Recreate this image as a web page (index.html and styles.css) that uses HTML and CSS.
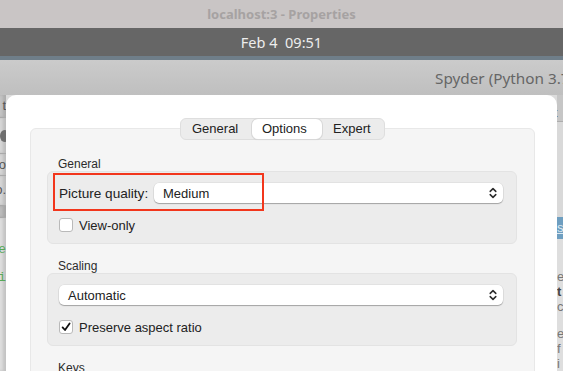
FILE: index.html
```html
<!DOCTYPE html>
<html lang="en">
<head>
    <meta charset="UTF-8">
    <title>localhost:3 - Properties</title>
    <link rel="stylesheet" href="styles.css">
</head>
<body>
    <div class="titlebar">localhost:3 - Properties</div>
    <div class="clockbar">Feb 4&nbsp; 09:51</div>
    <div class="appbar"><span class="app-title">Spyder (Python 3.7)</span></div>

    <div class="desk">
        <div class="edge edge-left">
            <div class="strip s-top">t</div>
            <div class="strip s-icon"><span class="blob"></span></div>
            <div class="strip s-row1">o</div>
            <div class="strip s-row2">o.</div>
            <div class="strip s-band"></div>
            <div class="strip s-code">
                <span class="code-e">e</span>
                <span class="code-i">i</span>
            </div>
        </div>

        <div class="dialog">
            <div class="tabs">
                <span class="tab">General</span>
                <span class="tab active">Options</span>
                <span class="tab">Expert</span>
            </div>

            <div class="panel">
                <div class="group-label">General</div>
                <div class="group">
                    <div class="row">
                        <span class="field-label">Picture quality:</span>
                        <div class="combo">
                            <span>Medium</span>
                            <svg class="chevrons" width="8" height="12" viewBox="0 0 8 12"><path d="M1.2 4.4 L4 1.6 L6.8 4.4 M1.2 7.6 L4 10.4 L6.8 7.6" fill="none" stroke="#2b2b2b" stroke-width="1.5" stroke-linecap="round" stroke-linejoin="round"/></svg>
                        </div>
                    </div>
                    <div class="check"><span class="box"></span>View-only</div>
                    <div class="highlight"></div>
                </div>

                <div class="group-label">Scaling</div>
                <div class="group">
                    <div class="row">
                        <div class="combo">
                            <span>Automatic</span>
                            <svg class="chevrons" width="8" height="12" viewBox="0 0 8 12"><path d="M1.2 4.4 L4 1.6 L6.8 4.4 M1.2 7.6 L4 10.4 L6.8 7.6" fill="none" stroke="#2b2b2b" stroke-width="1.5" stroke-linecap="round" stroke-linejoin="round"/></svg>
                        </div>
                    </div>
                    <div class="check">
                        <span class="box"><svg width="12" height="12" viewBox="0 0 12 12"><path d="M2.6 6.4 L5 9 L9.6 2.4" fill="none" stroke="#111" stroke-width="1.8" stroke-linecap="round" stroke-linejoin="round"/></svg></span>
                        Preserve aspect ratio
                    </div>
                </div>

                <div class="group-label">Keys</div>
                <div class="group group-cut"></div>
            </div>
        </div>

        <div class="edge edge-right">
            <div class="strip r-top">t</div>
            <div class="strip r-mid"></div>
            <div class="strip r-blue">s</div>
            <div class="strip r-text">
                <span class="r-e1">e</span>
                <span class="r-t">t</span>
                <span class="r-c">c</span>
                <span class="r-e2">e</span>
                <span class="r-f">f</span>
                <span class="r-i">i</span>
            </div>
        </div>
    </div>
</body>
</html>
```

FILE: styles.css
```css
* {
    margin: 0;
    padding: 0;
    box-sizing: border-box;
}

body {
    width: 563px;
    height: 371px;
    overflow: hidden;
    background: #dcdcdc;
    font-family: "Liberation Sans", Arial, sans-serif;
    color: #222;
}

/* desktop chrome */

.titlebar {
    height: 28px;
    line-height: 29px;
    text-align: center;
    background: #c9c5c5;
    color: #a6a2a2;
    font-family: "Noto Sans", sans-serif;
    font-weight: bold;
    font-size: 13px;
}

.clockbar {
    height: 32px;
    line-height: 28px;
    text-align: center;
    background: #666;
    border-bottom: 4px solid #6f7e89;
    color: #ededed;
    font-family: "Noto Sans", sans-serif;
    font-size: 14.5px;
}

.appbar {
    height: 35px;
    background: linear-gradient(#cbcbcb, #bfbfbf);
    padding-left: 435px;
    white-space: nowrap;
    overflow: hidden;
}

.app-title {
    line-height: 36px;
    font-family: "Noto Sans", sans-serif;
    font-size: 15.3px;
    color: #666;
}

.desk {
    display: flex;
    height: 276px;
    overflow: hidden;
}

/* background windows peeking out at the sides */

.edge {
    width: 6px;
    flex: none;
    overflow: hidden;
    display: flex;
    flex-direction: column;
    font-size: 13px;
    color: #555;
    line-height: 16px;
}

.strip {
    white-space: nowrap;
    display: flex;
}

.edge-left .strip {
    justify-content: flex-end;
    border-top: 1px solid #a9a9a9;
    box-shadow: inset -3px 0 3px rgba(0, 0, 0, 0.12);
}

.s-top { height: 22px; background: #c4c4c4; border-top: 0 !important; padding-top: 3px; }
.s-icon { height: 36px; background: #d6d6d6; align-items: center; }
.s-row1 { height: 22px; background: #d6d6d6; padding-top: 3px; }
.s-row2 { height: 30px; background: #d6d6d6; padding-top: 6px; }
.s-band { height: 12px; background: #bcbcbc; }

.edge-left .s-code {
    flex: 1;
    background: #dedede;
    flex-direction: column;
    justify-content: flex-start;
    align-items: flex-end;
    font-family: "Liberation Mono", monospace;
    color: #58a858;
}

.blob {
    width: 9px;
    height: 12px;
    margin-right: -3px;
    border-radius: 50%;
    background: #6e6e6e;
}

.code-e { margin-top: 24px; }
.code-i { margin-top: 12px; }

.edge-right .strip {
    justify-content: flex-start;
}

.r-top { height: 28px; background: #c6c6c6; border-bottom: 1px solid #adadad; padding-top: 10px; margin-left: -3px; }
.r-mid { height: 99px; background: #d9d9d9; }
.r-blue { height: 23px; background: #6e9ec0; color: #dbe8f1; text-decoration: underline; padding-top: 3px; }

.r-text {
    flex: 1;
    background: #dedede;
    flex-direction: column;
    color: #777;
    line-height: 15px;
    padding-top: 30px;
}

.r-t { font-weight: bold; color: #444; }
.r-e2 { margin-top: 12px; }

/* the properties dialog */

.dialog {
    width: 551px;
    flex: none;
    background: #fff;
    border-radius: 10px 10px 0 0;
    padding: 23px 22px 0 24px;
    font-size: 13px;
}

.tabs {
    position: relative;
    z-index: 1;
    display: flex;
    width: 205px;
    height: 22px;
    margin: 0 auto;
    background: #ececec;
    border: 1px solid #dedede;
    border-radius: 6px;
}

.tab {
    flex: none;
    line-height: 20px;
    padding: 0 11px;
    color: #222;
}

.tab:first-child { width: 71px; }
.tab:last-child { flex: 1; padding-left: 11px; }

.tab.active {
    width: 70px;
    background: #fff;
    border-radius: 6px;
    box-shadow: 0 0 0 1px #d8d8d8, 0 1px 1px rgba(0, 0, 0, 0.12);
    padding-left: 10px;
}

.panel {
    margin-top: -12px;
    height: 260px;
    background: #f5f5f5;
    border: 1px solid #e8e8e8;
    border-radius: 6px;
    padding: 28px 17px 0 16px;
    overflow: hidden;
}

.group-label {
    font-size: 12px;
    line-height: 14px;
    color: #2c2c2c;
    padding-left: 11px;
}

.group {
    position: relative;
    margin-bottom: 15px;
    background: #ececec;
    border: 1px solid #e3e3e3;
    border-radius: 6px;
    padding: 11px 13px 11px 11px;
    display: flex;
    flex-direction: column;
    gap: 15px;
}

.group-cut {
    height: 40px;
}

.row {
    display: flex;
    align-items: center;
    height: 20px;
}

.field-label {
    width: 95px;
    flex: none;
    font-size: 13.6px;
    white-space: nowrap;
}

.combo {
    flex: 1;
    height: 20px;
    display: flex;
    align-items: center;
    justify-content: space-between;
    padding: 0 6px 0 9px;
    background: #fff;
    border-radius: 5px;
    box-shadow: 0 1px 1px rgba(0, 0, 0, 0.28), 0 0 0 0.5px rgba(0, 0, 0, 0.08);
}

.check {
    display: flex;
    align-items: center;
    height: 14px;
}

.box {
    width: 14px;
    height: 14px;
    margin-right: 6px;
    background: #fff;
    border: 1px solid #b9b9b9;
    border-radius: 3px;
    display: flex;
    align-items: center;
    justify-content: center;
}

/* red annotation frame drawn over the screenshot */
.highlight {
    position: absolute;
    left: 5px;
    top: 1px;
    width: 211px;
    height: 38px;
    border: 2px solid #f2361c;
}
```
